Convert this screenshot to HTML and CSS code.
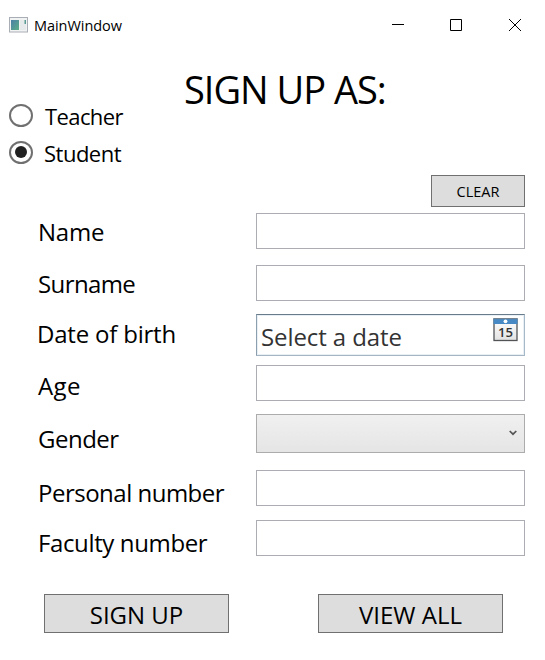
FILE: index.html
```html
<!DOCTYPE html>
<html lang="en">
<head>
<meta charset="utf-8">
<title>MainWindow</title>
<link rel="stylesheet" href="styles.css">
</head>
<body>
<header class="titlebar">
  <svg class="app-icon" width="19" height="16" viewBox="0 0 19 16">
    <defs><linearGradient id="pane" x2="1" y2="1"><stop stop-color="#4a7fa8"/><stop offset="1" stop-color="#5cae87"/></linearGradient></defs>
    <rect x=".5" y=".5" width="18" height="14.5" fill="#f1f3f3" stroke="#a9adb6"/>
    <rect x="2" y="3" width="8" height="10" fill="url(#pane)"/>
    <rect x="11" y="3" width="6" height="10" fill="#e6eaea"/>
    <rect x="15.5" y="3" width="1.5" height="4" fill="#5a9c93"/>
  </svg>
  <span class="app-title">MainWindow</span>
  <svg class="controls" width="130" height="14" viewBox="0 0 130 14" fill="none" stroke="#000">
    <path d="M0 6.5h12M58.500 1.500h11v11h-11zM117 1l12 12M129 1l-12 12"/>
  </svg>
</header>
<main>
  <h1><span>SIGN UP AS:</span></h1>
  <div class="roles">
    <label class="role"><i class="radio"></i><span class="teacher">Teacher</span></label>
    <label class="role"><i class="radio checked"></i><span class="student">Student</span></label>
  </div>
  <div class="clear-row"><button class="clear"><span>CLEAR</span></button></div>
  <form>
    <div class="row name"><label>Name</label><div class="field"></div></div>
    <div class="row surname"><label>Surname</label><div class="field"></div></div>
    <div class="row birth"><label>Date of birth</label>
      <div class="field date"><span>Select a date</span>
        <svg width="25" height="24" viewBox="0 0 25 24">
          <defs><linearGradient id="page" x2="0" y2="1"><stop stop-color="#fff"/><stop offset="1" stop-color="#e2e2e2"/></linearGradient></defs>
          <rect x="1" y="1" width="23" height="21.500" fill="url(#page)" stroke="#515357" stroke-width="1.300"/>
          <rect x=".5" y=".5" width="24" height="5.500" fill="#4689c4"/>
          <path d="M.5 .7h24" stroke="#76818c"/>
          <circle cx="12.500" cy="3.300" r="1.900" fill="#fff"/>
          <text x="12.500" y="19.300" text-anchor="middle" class="day" textLength="15" lengthAdjust="spacingAndGlyphs">15</text>
        </svg>
      </div></div>
    <div class="row age"><label>Age</label><div class="field"></div></div>
    <div class="row gender"><label>Gender</label>
      <div class="field combo"><svg width="8" height="6" viewBox="0 0 8 6"><path d="M.7 1L4 4.200 7.300 1" fill="none" stroke="#555" stroke-width="1.700"/></svg></div></div>
    <div class="row personal"><label>Personal number</label><div class="field"></div></div>
    <div class="row faculty"><label>Faculty number</label><div class="field"></div></div>
  </form>
  <div class="actions"><button class="signup"><span>SIGN UP</span></button><button class="viewall"><span>VIEW ALL</span></button></div>
</main>
</body>
</html>
```
FILE: styles.css
```css
* { box-sizing: border-box; }
body { margin: 0; height: 660px; overflow: hidden; background: #fff; color: #000; font-family: "Open Sans", "Noto Sans", sans-serif; }
.titlebar { display: flex; align-items: center; height: 50px; padding: 0 23px 0 9px; }
.app-title { margin-left: 6px; font-size: 14.5px; letter-spacing: -.05px; }
.controls { margin-left: auto; }
h1 { margin: 14px 0 0 184px; height: 33px; font-size: 38px; line-height: 50px; font-weight: 400; white-space: nowrap; letter-spacing: -1px; }
.roles { width: 140px; padding-left: 9px; }
.role { display: flex; align-items: center; height: 37px; font-size: 22px; line-height: 37px; }
.role span { margin-left: 12px; position: relative; top: 1px; letter-spacing: -.6px; }
.role .student { letter-spacing: -.5px; margin-left: 11px; }
.radio { display: flex; align-items: center; justify-content: center; width: 24px; height: 23px; margin-top: -1px; border: 2px solid #707070; border-radius: 50%; }
.radio.checked::after { content: ""; width: 12px; height: 12px; border-radius: 50%; background: #212121; }
.clear-row { display: flex; justify-content: flex-end; margin-top: 4px; padding-right: 20px; }
button { display: flex; align-items: center; justify-content: center; padding: 0; border: 1px solid #707070; background: #ddd; color: #000; font-family: inherit; font-size: 24px; white-space: nowrap; }
.clear { width: 94px; height: 32px; font-size: 14.5px; }
form { margin-top: 6px; padding: 0 20px 0 37px; }
.row { display: grid; grid-template-columns: 219px 269px; grid-template-rows: 100%; height: 36px; }
.row label { padding-left: 1px; font-size: 24px; line-height: 38px; white-space: nowrap; }
.field { border: 1px solid #abadb3; background: #fff; }
.name label { letter-spacing: -.2px; }
.surname { margin-top: 16px; }
.surname label { letter-spacing: -.6px; }
.birth { margin-top: 13px; height: 42px; }
.birth label { padding-left: 0; line-height: 40px; letter-spacing: -.2px; }
.age { margin-top: 9px; }
.age label { line-height: 42px; letter-spacing: .4px; }
.gender { margin-top: 13px; height: 39px; }
.gender label { line-height: 50px; letter-spacing: -.5px; }
.personal { margin-top: 17px; }
.personal label { line-height: 46px; letter-spacing: -.5px; }
.faculty { margin-top: 14px; }
.faculty label { line-height: 46px; letter-spacing: -.37px; }
.date { display: flex; justify-content: space-between; padding: 3px 6px 0 4px; border-color: #687b8b #a5b9c8 #a5b5c4 #8b9fae; color: #333; font-size: 24px; line-height: 38px; letter-spacing: -.1px; box-shadow: inset 0 0 0 1px #e9f0f5; }
.day { font: 600 13px "Open Sans", sans-serif; letter-spacing: 0; fill: #333; }
.combo { display: flex; align-items: center; justify-content: flex-end; padding-right: 7px; border-color: #acacac; background: linear-gradient(#f0f0f0, #e5e5e5); }
.combo svg { margin-top: -2px; }
.actions { display: flex; gap: 89px; margin: 38px 0 0 44px; }
.actions button { width: 185px; height: 39px; }
.actions span { position: relative; top: 1px; }
```
